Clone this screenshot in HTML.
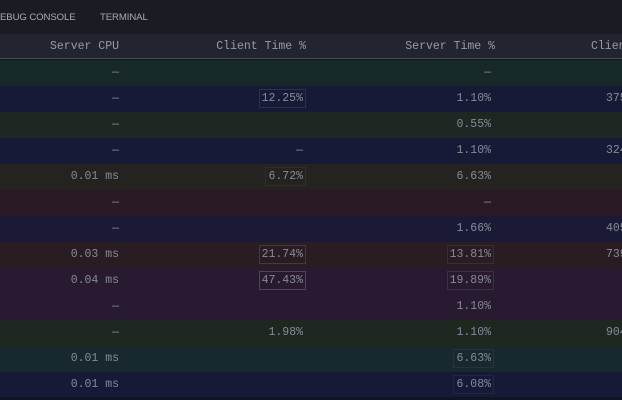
<!DOCTYPE html>
<html><head><meta charset="utf-8"><style>
*{margin:0;padding:0;box-sizing:border-box}
body{width:622px;height:400px;overflow:hidden;background:#14151c;position:relative;font-family:"Liberation Mono",monospace;font-size:11.5px;color:#868a97}
.top{position:absolute;left:0;top:0;width:622px;height:34px;background:#1a1b23}
.tab{position:absolute;top:12px;font-family:"Liberation Sans",sans-serif;font-size:9.6px;color:#a9acb6;letter-spacing:-0.1px}
.hdr{position:absolute;left:0;top:34px;width:622px;height:25px;background:#22242f;border-bottom:1px solid #4a4d58}
.row{position:absolute;left:0;width:622px;height:26px}
.c{position:absolute;line-height:26px;white-space:nowrap}
.r1{right:503px}.r2{right:319px}.r3{right:131px}.r4{left:606px}
.b{display:inline-block;line-height:17px;padding:0 2px;border:1px solid #5e1842;margin-right:-3px}
.h{position:absolute;top:34px;line-height:25px;color:#979ba7}
</style></head><body>
<div class="top"></div>
<div class="tab" style="left:0">EBUG CONSOLE</div>
<div class="tab" style="left:100px">TERMINAL</div>
<div class="hdr"></div>
<div class="h" style="right:503px">Server CPU</div>
<div class="h" style="right:316px">Client Time %</div>
<div class="h" style="right:127px">Server Time %</div>
<div class="h" style="left:591px">Client</div>

<div class="row" style="top:60px;background:#172829"><span class="c r1">—</span><span class="c r3">—</span></div>
<div class="row" style="top:86px;background:#171a37"><span class="c r1">—</span><span class="c r2"><span class="b">12.25%</span></span><span class="c r3">1.10%</span><span class="c r4">375</span></div>
<div class="row" style="top:112px;background:#1f2722"><span class="c r1">—</span><span class="c r3">0.55%</span></div>
<div class="row" style="top:138px;background:#171a37"><span class="c r1">—</span><span class="c r2">—</span><span class="c r3">1.10%</span><span class="c r4">324</span></div>
<div class="row" style="top:164px;background:#242320"><span class="c r1">0.01 ms</span><span class="c r2"><span class="b" style="border-color:#4a2030">6.72%</span></span><span class="c r3">6.63%</span></div>
<div class="row" style="top:190px;background:#291a26"><span class="c r1">—</span><span class="c r3">—</span></div>
<div class="row" style="top:216px;background:#1b1a36"><span class="c r1">—</span><span class="c r3">1.66%</span><span class="c r4">405</span></div>
<div class="row" style="top:242px;background:#291c22"><span class="c r1">0.03 ms</span><span class="c r2"><span class="b" style="border-color:#8a1444">21.74%</span></span><span class="c r3"><span class="b">13.81%</span></span><span class="c r4">739</span></div>
<div class="row" style="top:268px;background:#281a30"><span class="c r1">0.04 ms</span><span class="c r2"><span class="b" style="border-color:#c0104c">47.43%</span></span><span class="c r3"><span class="b" style="border-color:#6e1846">19.89%</span></span></div>
<div class="row" style="top:294px;background:#281a30"><span class="c r1">—</span><span class="c r3">1.10%</span></div>
<div class="row" style="top:320px;background:#1f2820"><span class="c r1">—</span><span class="c r2">1.98%</span><span class="c r3">1.10%</span><span class="c r4">904</span></div>
<div class="row" style="top:346px;background:#17292c"><span class="c r1">0.01 ms</span><span class="c r3"><span class="b" style="border-color:#2c2f3e">6.63%</span></span></div>
<div class="row" style="top:372px;background:#171a37;height:25px"><span class="c r1">0.01 ms</span><span class="c r3"><span class="b" style="border-color:#361c40">6.08%</span></span></div>
</body></html>
